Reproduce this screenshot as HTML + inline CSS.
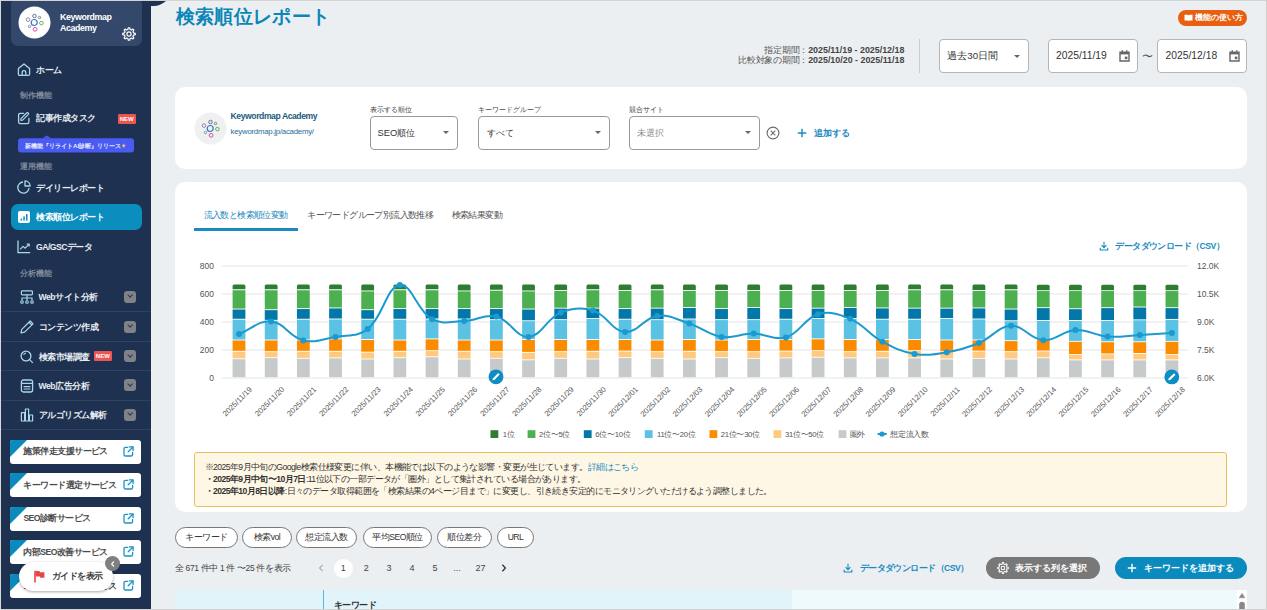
<!DOCTYPE html>
<html lang="ja">
<head>
<meta charset="utf-8">
<style>
*{box-sizing:border-box;margin:0;padding:0}
html,body{width:1267px;height:610px;overflow:hidden}
body{position:relative;background:#ebeff2;font-family:"Liberation Sans",sans-serif;color:#333}
.a{position:absolute}
.t{position:absolute;white-space:nowrap}
.sb{left:1px;top:1px;width:150px;height:608px;background:#1f3150}
.navt{position:absolute;left:36px;font-size:8.6px;letter-spacing:-0.5px;font-weight:bold;color:#e6ecf2;white-space:nowrap;height:12px;line-height:12px;margin-top:0.5px}
.sect{position:absolute;left:20px;margin-top:1px;font-size:7.6px;font-weight:bold;color:#7f8a9b;white-space:nowrap;height:10px;line-height:10px}
.ico{position:absolute;left:17px}
.div{position:absolute;left:1px;width:150px;height:1px;background:#2e4261}
.chev{position:absolute;left:124px;width:12px;height:12px;border-radius:3px;background:#7f8286}
.chev::after{content:"";position:absolute;left:3.8px;top:2.9px;width:3.3px;height:3.3px;border-right:1.2px solid #2a3850;border-bottom:1.2px solid #2a3850;transform:rotate(45deg)}
.new{position:absolute;background:#ee5451;color:#fff;font-size:6px;font-weight:bold;text-align:center;line-height:10.6px;height:10px;border-radius:1.2px}
.svc{position:absolute;left:10px;width:130.5px;height:24px;background:#fff;border-radius:3px;overflow:hidden}
.svc .tri{position:absolute;left:0;top:0;width:0;height:0;border-top:17px solid #0b8bbd;border-right:17px solid transparent}
.svc .st{position:absolute;left:13.4px;top:5.5px;font-size:8.6px;letter-spacing:-0.55px;font-weight:bold;color:#4a4a4a;line-height:12px;white-space:nowrap}
.svc svg{position:absolute;left:113px;top:6px}
.card{position:absolute;left:175px;width:1072px;background:#fff;border-radius:10px}
.sel{position:absolute;background:#fff;border:1px solid #b2b6b9;border-radius:4px}
.caret{position:absolute;width:0;height:0;border-left:3.5px solid transparent;border-right:3.5px solid transparent;border-top:3.5px solid #666}
.lbl{position:absolute;font-size:7px;color:#444;white-space:nowrap;line-height:10px;margin-top:0.6px}
.chip{position:absolute;top:527px;height:21px;border:1px solid #777;border-radius:11px;background:#fff;font-size:8.6px;letter-spacing:-0.5px;font-weight:normal;color:#333;text-align:center;line-height:19px;white-space:nowrap}
.pg{position:absolute;top:562px;font-size:9px;color:#444;line-height:12px;text-align:center;width:14px}
</style>
</head>
<body>
<!-- outer borders -->
<div class="a" style="left:0;top:0;width:1267px;height:1px;background:#d3d3d3"></div>
<div class="a" style="left:0;top:0;width:1px;height:610px;background:#d8d8d8"></div>
<div class="a" style="left:1266px;top:0;width:1px;height:610px;background:#cfcfcf"></div>
<div class="a" style="left:0;top:609px;width:1267px;height:1px;background:#d3d3d3"></div>

<!-- ================= SIDEBAR ================= -->
<div class="a sb"></div>
<svg class="a" style="left:151px;top:1px" width="16" height="7"><path d="M0,0 H15 Q9,5 3,5 H0 Z" fill="#1f3150"/></svg>
<div class="a" style="left:10.5px;top:1px;width:131.5px;height:45px;background:#33486a;border-radius:2px 2px 7px 7px"></div>
<svg class="a" style="left:18px;top:6px" width="33" height="33" viewBox="-16.5 -16.5 33 33">
 <circle r="16" fill="#fff"/>
 <circle cx="-0.3" cy="0" r="3" fill="none" stroke="#2f7ad0" stroke-width="1.2"/>
 <circle cx="0" cy="-6.5" r="1.75" fill="none" stroke="#5d7178" stroke-width="0.95"/>
 <circle cx="5" cy="-5" r="1.2" fill="none" stroke="#777" stroke-width="0.9"/>
 <circle cx="6.9" cy="0.6" r="1.8" fill="none" stroke="#5fae4a" stroke-width="0.95"/>
 <circle cx="-6.5" cy="-2.9" r="1.8" fill="none" stroke="#9a79a8" stroke-width="0.95"/>
 <circle cx="-5" cy="4" r="1.2" fill="none" stroke="#888" stroke-width="0.9"/>
 <circle cx="0.6" cy="6.8" r="1.9" fill="none" stroke="#de4f9a" stroke-width="1"/>
</svg>
<div class="t" style="left:60px;top:11.8px;font-size:8.9px;font-weight:bold;color:#fff;line-height:11.3px;letter-spacing:-0.42px">Keywordmap<br>Academy</div>
<svg class="a" style="left:122.4px;top:27.2px" width="14" height="14" viewBox="0 0 14 14"><path d="M5.86,2.54 L6.31,0.74 L7.69,0.74 L8.14,2.54 L9.34,3.04 L10.94,2.08 L11.92,3.06 L10.96,4.66 L11.46,5.86 L13.26,6.31 L13.26,7.69 L11.46,8.14 L10.96,9.34 L11.92,10.94 L10.94,11.92 L9.34,10.96 L8.14,11.46 L7.69,13.26 L6.31,13.26 L5.86,11.46 L4.66,10.96 L3.06,11.92 L2.08,10.94 L3.04,9.34 L2.54,8.14 L0.74,7.69 L0.74,6.31 L2.54,5.86 L3.04,4.66 L2.08,3.06 L3.06,2.08 L4.66,3.04 Z" fill="none" stroke="#fff" stroke-width="1.2" stroke-linejoin="round"/><circle cx="7" cy="7" r="2.1" fill="none" stroke="#fff" stroke-width="1.2"/></svg>

<!-- home -->
<svg class="ico" style="top:63px" width="14" height="13" viewBox="0 0 14 13"><path d="M1.4,5.6 L7,1 L12.6,5.6 V11 Q12.6,12.3 11.3,12.3 H2.7 Q1.4,12.3 1.4,11 Z M5.2,12.3 V9.2 Q5.2,7.7 7,7.7 Q8.8,7.7 8.8,9.2 V12.3" fill="none" stroke="#a9d8e8" stroke-width="1.3" stroke-linejoin="round"/></svg>
<div class="navt" style="top:63px">ホーム</div>
<div class="sect" style="top:90.3px">制作機能</div>
<svg class="ico" style="top:111px" width="14" height="14" viewBox="0 0 14 14"><path d="M6.6,2.3 H3.2 Q1.6,2.3 1.6,3.9 V11 Q1.6,12.6 3.2,12.6 H10.3 Q11.9,12.6 11.9,11 V7.4" fill="none" stroke="#a9d8e8" stroke-width="1.3" stroke-linecap="round"/><path d="M5.6,9.2 L11.2,3.6 Q12,2.8 11.2,2 Q10.4,1.2 9.6,2 L4,7.6 L3.9,9.3 Z" fill="none" stroke="#a9d8e8" stroke-width="1.2" stroke-linejoin="round"/></svg>
<div class="navt" style="top:111.7px">記事作成タスク</div>
<div class="new" style="left:117.7px;top:113.6px;width:18px">NEW</div>
<svg class="a" style="left:18px;top:135px" width="117" height="18"><path d="M24.5,3.3 L28.7,0.6 L32.9,3.3 Z" fill="#4a5bf2"/><rect x="0" y="3.3" width="116" height="14.2" rx="3" fill="#4a5bf2"/></svg>
<div class="t" style="left:25px;top:140.5px;font-size:6.2px;font-weight:bold;color:#e8ecff;line-height:10px">新機能『リライトAI診断』リリース<span style="color:#f9c86a">✦</span></div>
<div class="sect" style="top:160.6px">運用機能</div>
<svg class="ico" style="top:180px" width="14" height="14" viewBox="0 0 14 14"><path d="M6,2 A5.6,5.6 0 1 0 12,8" fill="none" stroke="#a9d8e8" stroke-width="1.3"/><path d="M8,0.9 A5.3,5.3 0 0 1 13.1,6 H8 Z" fill="none" stroke="#a9d8e8" stroke-width="1.3" stroke-linejoin="round"/></svg>
<div class="navt" style="top:181.5px">デイリーレポート</div>
<div class="a" style="left:10.5px;top:203.7px;width:131.5px;height:26.8px;background:#0b8dbe;border-radius:7px"></div>
<svg class="ico" style="top:211px;left:17.8px" width="12" height="12" viewBox="0 0 12 12"><rect width="12" height="12" rx="2" fill="#fff"/><rect x="2.6" y="7.6" width="1.5" height="2" fill="#0b8dbe"/><rect x="5.3" y="5.4" width="1.5" height="4.2" fill="#0b8dbe"/><rect x="8" y="3" width="1.5" height="6.6" fill="#0b8dbe"/></svg>
<div class="navt" style="top:210.2px;color:#fff">検索順位レポート</div>
<svg class="ico" style="top:240px" width="14" height="14" viewBox="0 0 14 14"><path d="M1,0.5 V12.6 H13.2" fill="none" stroke="#a9d8e8" stroke-width="1.3"/><path d="M3.2,9.4 L6,6.4 L8.2,8.2 L12,4.2 M9.6,4 H12.2 V6.6" fill="none" stroke="#a9d8e8" stroke-width="1.2" stroke-linejoin="round"/></svg>
<div class="navt" style="top:240px">GA/GSCデータ</div>
<div class="sect" style="top:267.5px">分析機能</div>

<svg class="ico" style="top:290px;left:20px" width="14" height="14" viewBox="0 0 14 14"><rect x="1.4" y="0.8" width="11" height="4" rx="0.8" fill="none" stroke="#a9d8e8" stroke-width="1.2"/><path d="M7,4.8 V10.6 M2,10.6 V8 H12 V10.6" fill="none" stroke="#a9d8e8" stroke-width="1.2"/><circle cx="2" cy="12" r="1.3" fill="none" stroke="#a9d8e8" stroke-width="1.1"/><circle cx="7" cy="12" r="1.3" fill="none" stroke="#a9d8e8" stroke-width="1.1"/><circle cx="12" cy="12" r="1.3" fill="none" stroke="#a9d8e8" stroke-width="1.1"/></svg>
<div class="navt" style="top:290.5px;left:38.6px">Webサイト分析</div>
<div class="chev" style="top:290.6px"></div>
<div class="div" style="top:311px"></div>
<svg class="ico" style="top:320px;left:20px" width="14" height="14" viewBox="0 0 14 14"><path d="M1,13 L1.8,9.4 L10.2,1 L13,3.8 L4.6,12.2 Z M9,2.2 L11.8,5" fill="none" stroke="#a9d8e8" stroke-width="1.2" stroke-linejoin="round"/></svg>
<div class="navt" style="top:320px;left:38.6px">コンテンツ作成</div>
<div class="chev" style="top:320.5px"></div>
<div class="div" style="top:341px"></div>
<svg class="ico" style="top:349.5px;left:20px" width="14" height="14" viewBox="0 0 14 14"><circle cx="6" cy="6" r="4.9" fill="none" stroke="#a9d8e8" stroke-width="1.3"/><path d="M9.6,9.6 L12.8,12.8 M3.6,4.8 A2.8,2.8 0 0 1 6,3" fill="none" stroke="#a9d8e8" stroke-width="1.2"/></svg>
<div class="navt" style="top:350px;left:38.6px">検索市場調査</div>
<div class="new" style="left:93.8px;top:351px;width:18px">NEW</div>
<div class="chev" style="top:350px"></div>
<div class="div" style="top:370.3px"></div>
<svg class="ico" style="top:378.5px;left:20px" width="14" height="14" viewBox="0 0 14 14"><rect x="1.4" y="1" width="11.2" height="12" rx="2" fill="none" stroke="#a9d8e8" stroke-width="1.3"/><path d="M1.4,4.4 H12.6 M3.6,7.6 H10.4 M3.6,10 H10.4" fill="none" stroke="#a9d8e8" stroke-width="1.2"/></svg>
<div class="navt" style="top:379px;left:38.6px">Web広告分析</div>
<div class="chev" style="top:379px"></div>
<div class="div" style="top:400.3px"></div>
<svg class="ico" style="top:408px;left:20px" width="14" height="14" viewBox="0 0 14 14"><path d="M1,13 H13 M1.4,13 V4.6 H4.6 V13 M5.4,13 V1 H8.6 V13 M9.4,13 V7 H12.6 V13" fill="none" stroke="#a9d8e8" stroke-width="1.2" stroke-linejoin="round"/></svg>
<div class="navt" style="top:408.6px;left:38.6px">アルゴリズム解析</div>
<div class="chev" style="top:408.6px"></div>
<div class="div" style="top:429.3px"></div>

<!-- service cards -->
<div class="svc" style="top:439.5px"><div class="tri"></div><div class="st">施策伴走支援サービス</div><svg width="11" height="11" viewBox="0 0 11 11"><path d="M4.6,1.4 H2.6 Q1,1.4 1,3 V8.4 Q1,10 2.6,10 H8 Q9.6,10 9.6,8.4 V6.4 M6.4,0.9 H10.1 V4.6 M9.9,1.1 L5.2,5.8" fill="none" stroke="#1a92c6" stroke-width="1.3" stroke-linecap="round"/></svg></div>
<div class="svc" style="top:473px"><div class="tri"></div><div class="st">キーワード選定サービス</div><svg width="11" height="11" viewBox="0 0 11 11"><path d="M4.6,1.4 H2.6 Q1,1.4 1,3 V8.4 Q1,10 2.6,10 H8 Q9.6,10 9.6,8.4 V6.4 M6.4,0.9 H10.1 V4.6 M9.9,1.1 L5.2,5.8" fill="none" stroke="#1a92c6" stroke-width="1.3" stroke-linecap="round"/></svg></div>
<div class="svc" style="top:506.7px"><div class="tri"></div><div class="st">SEO診断サービス</div><svg width="11" height="11" viewBox="0 0 11 11"><path d="M4.6,1.4 H2.6 Q1,1.4 1,3 V8.4 Q1,10 2.6,10 H8 Q9.6,10 9.6,8.4 V6.4 M6.4,0.9 H10.1 V4.6 M9.9,1.1 L5.2,5.8" fill="none" stroke="#1a92c6" stroke-width="1.3" stroke-linecap="round"/></svg></div>
<div class="svc" style="top:540.3px"><div class="tri"></div><div class="st">内部SEO改善サービス</div><svg width="11" height="11" viewBox="0 0 11 11"><path d="M4.6,1.4 H2.6 Q1,1.4 1,3 V8.4 Q1,10 2.6,10 H8 Q9.6,10 9.6,8.4 V6.4 M6.4,0.9 H10.1 V4.6 M9.9,1.1 L5.2,5.8" fill="none" stroke="#1a92c6" stroke-width="1.3" stroke-linecap="round"/></svg></div>
<div class="svc" style="top:574.3px"><div class="tri"></div><div class="st">コンテンツ制作サービス</div><svg width="11" height="11" viewBox="0 0 11 11"><path d="M4.6,1.4 H2.6 Q1,1.4 1,3 V8.4 Q1,10 2.6,10 H8 Q9.6,10 9.6,8.4 V6.4 M6.4,0.9 H10.1 V4.6 M9.9,1.1 L5.2,5.8" fill="none" stroke="#1a92c6" stroke-width="1.3" stroke-linecap="round"/></svg></div>
<!-- guide pill -->
<div class="a" style="left:19px;top:562px;width:94px;height:29px;background:#fff;border-radius:15px;box-shadow:0 1px 3px rgba(0,0,0,0.35)"></div>
<svg class="a" style="left:33.5px;top:570px" width="11" height="13" viewBox="0 0 11 13"><path d="M1,0.8 V12.6" stroke="#e84545" stroke-width="1.6"/><path d="M1.6,1 H5.4 L6,2.2 H10.4 V7.8 H6.4 L5.8,6.6 H1.6 Z" fill="#e84545"/></svg>
<div class="t" style="left:51.6px;top:570px;font-size:8.6px;letter-spacing:-0.5px;font-weight:bold;color:#3c3c3c;line-height:12px">ガイドを表示</div>
<div class="a" style="left:105.4px;top:556px;width:15px;height:15px;border-radius:50%;background:#7f7f7f"></div>
<svg class="a" style="left:109px;top:559.5px" width="8" height="8" viewBox="0 0 8 8"><path d="M5,1.5 L2.6,4 L5,6.5" fill="none" stroke="#fff" stroke-width="1.1"/></svg>

<!-- ================= MAIN ================= -->
<div class="t" style="left:175.5px;top:5.2px;font-size:19px;letter-spacing:0.35px;font-weight:bold;color:#0b86b8;line-height:24px">検索順位レポート</div>
<div class="a" style="left:1177.7px;top:9.7px;width:69.3px;height:16.1px;border-radius:8px;background:#e8600f"></div>
<svg class="a" style="left:1184px;top:14px" width="9" height="8" viewBox="0 0 9 8"><path d="M0.5,0.8 H3.6 Q4.5,0.8 4.5,1.8 V7.4 Q4.5,6.6 3.6,6.6 H0.5 Z M8.5,0.8 H5.4 Q4.5,0.8 4.5,1.8 V7.4 Q4.5,6.6 5.4,6.6 H8.5 Z" fill="#fff"/></svg>
<div class="t" style="left:1194.5px;top:12.5px;font-size:8px;font-weight:bold;color:#fff;line-height:10px">機能の使い方</div>

<div class="t" style="left:700px;width:204.4px;text-align:right;top:44.5px;font-size:8.6px;color:#555;line-height:10.6px"><span style="letter-spacing:-0.25px">指定期間：</span><b style="color:#444;font-size:8.9px">2025/11/19 - 2025/12/18</b><br><span style="letter-spacing:-0.25px">比較対象の期間：</span><b style="color:#444;font-size:8.9px">2025/10/20 - 2025/11/18</b></div>
<div class="a" style="left:919px;top:39px;width:1px;height:34px;background:#c9cdd0"></div>
<div class="sel" style="left:938.5px;top:39.3px;width:90px;height:33.3px"></div>
<div class="t" style="left:947.3px;top:50px;font-size:9.8px;color:#333;line-height:12px">過去30日間</div>
<div class="caret" style="left:1013.5px;top:55px"></div>
<div class="sel" style="left:1047.5px;top:39.3px;width:90.2px;height:33.3px"></div>
<div class="t" style="left:1056px;top:50px;font-size:10.3px;color:#333;line-height:12px">2025/11/19</div>
<svg class="a" style="left:1119px;top:50px" width="11" height="12" viewBox="0 0 11 12"><path d="M1,2.2 H10 V11 H1 Z" fill="none" stroke="#666" stroke-width="1.4"/><rect x="1" y="2" width="9" height="2.4" fill="#666"/><rect x="2.6" y="0.2" width="1.3" height="2" fill="#666"/><rect x="7.1" y="0.2" width="1.3" height="2" fill="#666"/><rect x="5.8" y="6.6" width="2.6" height="2.6" fill="#666"/></svg>
<div class="t" style="left:1142px;top:49px;font-size:11px;color:#555;line-height:14px">〜</div>
<div class="sel" style="left:1157.3px;top:39.3px;width:89.7px;height:33.3px"></div>
<div class="t" style="left:1165.6px;top:50px;font-size:10.3px;color:#333;line-height:12px">2025/12/18</div>
<svg class="a" style="left:1228.5px;top:50px" width="11" height="12" viewBox="0 0 11 12"><path d="M1,2.2 H10 V11 H1 Z" fill="none" stroke="#666" stroke-width="1.4"/><rect x="1" y="2" width="9" height="2.4" fill="#666"/><rect x="2.6" y="0.2" width="1.3" height="2" fill="#666"/><rect x="7.1" y="0.2" width="1.3" height="2" fill="#666"/><rect x="5.8" y="6.6" width="2.6" height="2.6" fill="#666"/></svg>

<!-- filter card -->
<div class="card" style="top:87px;height:82px"></div>
<svg class="a" style="left:194px;top:112px" width="33" height="33" viewBox="-16.5 -16.5 33 33">
 <circle r="16" fill="#eef0f2"/>
 <circle cx="-0.3" cy="0" r="3" fill="none" stroke="#2f7ad0" stroke-width="1.2"/>
 <circle cx="0" cy="-6.5" r="1.75" fill="none" stroke="#5d7178" stroke-width="0.95"/>
 <circle cx="5" cy="-5" r="1.2" fill="none" stroke="#777" stroke-width="0.9"/>
 <circle cx="6.9" cy="0.6" r="1.8" fill="none" stroke="#5fae4a" stroke-width="0.95"/>
 <circle cx="-6.5" cy="-2.9" r="1.8" fill="none" stroke="#9a79a8" stroke-width="0.95"/>
 <circle cx="-5" cy="4" r="1.2" fill="none" stroke="#888" stroke-width="0.9"/>
 <circle cx="0.6" cy="6.8" r="1.9" fill="none" stroke="#de4f9a" stroke-width="1"/>
</svg>
<div class="t" style="left:230.6px;top:110px;font-size:8.6px;letter-spacing:-0.43px;font-weight:bold;color:#1b5a80;line-height:12px">Keywordmap Academy</div>
<div class="t" style="left:230.6px;top:125.5px;font-size:7.8px;letter-spacing:-0.24px;color:#1f6d9a;line-height:11px">keywordmap.jp/academy/</div>

<div class="lbl" style="left:369.8px;top:104px">表示する順位</div>
<div class="sel" style="left:369.8px;top:116px;width:88.4px;height:33.8px;border-color:#9a9a9a"></div>
<div class="t" style="left:377.6px;top:126.5px;font-size:9.4px;color:#333;line-height:12px">SEO順位</div>
<div class="caret" style="left:443px;top:131px"></div>

<div class="lbl" style="left:477.6px;top:104px">キーワードグループ</div>
<div class="sel" style="left:477.6px;top:116px;width:132px;height:33.8px;border-color:#9a9a9a"></div>
<div class="t" style="left:486.5px;top:126.5px;font-size:9.4px;color:#333;line-height:12px">すべて</div>
<div class="caret" style="left:594.5px;top:131px"></div>

<div class="lbl" style="left:628.5px;top:104px">競合サイト</div>
<div class="sel" style="left:628.5px;top:116px;width:131.7px;height:33.8px;border-color:#9a9a9a"></div>
<div class="t" style="left:637px;top:126.5px;font-size:9.4px;color:#8a8a8a;line-height:12px">未選択</div>
<div class="caret" style="left:745px;top:131px"></div>
<svg class="a" style="left:766px;top:126px" width="14" height="14" viewBox="0 0 14 14"><circle cx="7" cy="7" r="5.9" fill="none" stroke="#6a6a6a" stroke-width="1.1"/><path d="M4.7,4.7 L9.3,9.3 M9.3,4.7 L4.7,9.3" stroke="#6a6a6a" stroke-width="1.1"/></svg>
<svg class="a" style="left:797px;top:128px" width="10" height="10" viewBox="0 0 10 10"><path d="M5,0.8 V9.2 M0.8,5 H9.2" stroke="#1a8ac0" stroke-width="1.4"/></svg>
<div class="t" style="left:813.8px;top:126.5px;font-size:9px;font-weight:bold;color:#1a8ac0;line-height:12px">追加する</div>

<!-- chart card -->
<div class="card" style="top:182.4px;height:330px"></div>
<div class="t" style="left:203.7px;top:209px;font-size:8.6px;letter-spacing:-0.6px;color:#1a8ac0;line-height:12px">流入数と検索順位変動</div>
<div class="a" style="left:194px;top:228px;width:103.6px;height:2.6px;background:#1a8ac0"></div>
<div class="t" style="left:307.3px;top:209px;font-size:8.6px;letter-spacing:-0.6px;color:#555;line-height:12px">キーワードグループ別流入数推移</div>
<div class="t" style="left:451.7px;top:209px;font-size:8.6px;letter-spacing:-0.6px;color:#555;line-height:12px">検索結果変動</div>
<svg class="a" style="left:1098.5px;top:240.5px" width="10" height="10" viewBox="0 0 10 10"><path d="M5,0.8 V6.4 M2.6,4.2 L5,6.6 L7.4,4.2 M1.2,6.8 V9 H8.8 V6.8" fill="none" stroke="#1a8ac0" stroke-width="1.1"/></svg>
<div class="t" style="left:1115.2px;top:240px;font-size:8.6px;letter-spacing:-0.56px;font-weight:bold;color:#1a8ac0;line-height:12px">データダウンロード（CSV）</div>

<svg width="1267" height="610" style="position:absolute;left:0;top:0">
<line x1="222" y1="266" x2="1188" y2="266" stroke="#e5e5e5" stroke-width="1"/>
<line x1="222" y1="294" x2="1188" y2="294" stroke="#e5e5e5" stroke-width="1"/>
<line x1="222" y1="322" x2="1188" y2="322" stroke="#e5e5e5" stroke-width="1"/>
<line x1="222" y1="350" x2="1188" y2="350" stroke="#e5e5e5" stroke-width="1"/>
<line x1="222" y1="378" x2="1188" y2="378" stroke="#e5e5e5" stroke-width="1"/>
<text x="214" y="269" text-anchor="end" font-size="8.5" fill="#555">800</text>
<text x="1197" y="269" font-size="8.5" fill="#555">12.0K</text>
<text x="214" y="297" text-anchor="end" font-size="8.5" fill="#555">600</text>
<text x="1197" y="297" font-size="8.5" fill="#555">10.5K</text>
<text x="214" y="325" text-anchor="end" font-size="8.5" fill="#555">400</text>
<text x="1197" y="325" font-size="8.5" fill="#555">9.0K</text>
<text x="214" y="353" text-anchor="end" font-size="8.5" fill="#555">200</text>
<text x="1197" y="353" font-size="8.5" fill="#555">7.5K</text>
<text x="214" y="381" text-anchor="end" font-size="8.5" fill="#555">0</text>
<text x="1197" y="381" font-size="8.5" fill="#555">6.0K</text>
<path d="M232.60,289.36 V286.00 Q232.60,284.50 234.10,284.50 H243.90 Q245.40,284.50 245.40,286.00 V289.36 Z" fill="#2e7d32"/>
<rect x="232.60" y="290.26" width="12.8" height="18.33" fill="#4caf50"/>
<rect x="232.60" y="309.49" width="12.8" height="9.27" fill="#0277a8"/>
<rect x="232.60" y="319.66" width="12.8" height="19.87" fill="#5bc2e3"/>
<rect x="232.60" y="340.43" width="12.8" height="10.37" fill="#fb8c00"/>
<rect x="232.60" y="351.70" width="12.8" height="6.61" fill="#ffc97f"/>
<rect x="232.60" y="359.21" width="12.8" height="17.99" fill="#c6cacb"/>
<text x="252.6" y="390.0" text-anchor="end" font-size="7.7" fill="#555" transform="rotate(-45 252.6 390)">2025/11/19</text>
<path d="M264.77,289.36 V286.00 Q264.77,284.50 266.27,284.50 H276.07 Q277.57,284.50 277.57,286.00 V289.36 Z" fill="#2e7d32"/>
<rect x="264.77" y="290.26" width="12.8" height="18.99" fill="#4caf50"/>
<rect x="264.77" y="310.15" width="12.8" height="9.71" fill="#0277a8"/>
<rect x="264.77" y="320.76" width="12.8" height="18.77" fill="#5bc2e3"/>
<rect x="264.77" y="340.43" width="12.8" height="10.81" fill="#fb8c00"/>
<rect x="264.77" y="352.14" width="12.8" height="5.07" fill="#ffc97f"/>
<rect x="264.77" y="358.11" width="12.8" height="19.09" fill="#c6cacb"/>
<text x="284.8" y="390.0" text-anchor="end" font-size="7.7" fill="#555" transform="rotate(-45 284.8 390)">2025/11/20</text>
<path d="M296.94,289.36 V286.00 Q296.94,284.50 298.44,284.50 H308.24 Q309.74,284.50 309.74,286.00 V289.36 Z" fill="#2e7d32"/>
<rect x="296.94" y="290.26" width="12.8" height="17.88" fill="#4caf50"/>
<rect x="296.94" y="309.05" width="12.8" height="9.71" fill="#0277a8"/>
<rect x="296.94" y="319.66" width="12.8" height="19.87" fill="#5bc2e3"/>
<rect x="296.94" y="340.43" width="12.8" height="10.37" fill="#fb8c00"/>
<rect x="296.94" y="351.70" width="12.8" height="6.17" fill="#ffc97f"/>
<rect x="296.94" y="358.77" width="12.8" height="18.43" fill="#c6cacb"/>
<text x="316.9" y="390.0" text-anchor="end" font-size="7.7" fill="#555" transform="rotate(-45 316.9 390)">2025/11/21</text>
<path d="M329.11,289.36 V286.00 Q329.11,284.50 330.61,284.50 H340.41 Q341.91,284.50 341.91,286.00 V289.36 Z" fill="#2e7d32"/>
<rect x="329.11" y="290.26" width="12.8" height="17.22" fill="#4caf50"/>
<rect x="329.11" y="308.39" width="12.8" height="10.15" fill="#0277a8"/>
<rect x="329.11" y="319.44" width="12.8" height="18.99" fill="#5bc2e3"/>
<rect x="329.11" y="339.33" width="12.8" height="11.48" fill="#fb8c00"/>
<rect x="329.11" y="351.70" width="12.8" height="5.73" fill="#ffc97f"/>
<rect x="329.11" y="358.33" width="12.8" height="18.87" fill="#c6cacb"/>
<text x="349.1" y="390.0" text-anchor="end" font-size="7.7" fill="#555" transform="rotate(-45 349.1 390)">2025/11/22</text>
<path d="M361.28,290.47 V286.00 Q361.28,284.50 362.78,284.50 H372.58 Q374.08,284.50 374.08,286.00 V290.47 Z" fill="#2e7d32"/>
<rect x="361.28" y="291.37" width="12.8" height="17.88" fill="#4caf50"/>
<rect x="361.28" y="310.15" width="12.8" height="8.60" fill="#0277a8"/>
<rect x="361.28" y="319.66" width="12.8" height="19.43" fill="#5bc2e3"/>
<rect x="361.28" y="339.99" width="12.8" height="11.70" fill="#fb8c00"/>
<rect x="361.28" y="352.59" width="12.8" height="5.95" fill="#ffc97f"/>
<rect x="361.28" y="359.44" width="12.8" height="17.76" fill="#c6cacb"/>
<text x="381.3" y="390.0" text-anchor="end" font-size="7.7" fill="#555" transform="rotate(-45 381.3 390)">2025/11/23</text>
<path d="M393.45,289.36 V286.00 Q393.45,284.50 394.95,284.50 H404.75 Q406.25,284.50 406.25,286.00 V289.36 Z" fill="#2e7d32"/>
<rect x="393.45" y="290.26" width="12.8" height="17.88" fill="#4caf50"/>
<rect x="393.45" y="309.05" width="12.8" height="9.71" fill="#0277a8"/>
<rect x="393.45" y="319.66" width="12.8" height="19.87" fill="#5bc2e3"/>
<rect x="393.45" y="340.43" width="12.8" height="10.37" fill="#fb8c00"/>
<rect x="393.45" y="351.70" width="12.8" height="5.51" fill="#ffc97f"/>
<rect x="393.45" y="358.11" width="12.8" height="19.09" fill="#c6cacb"/>
<text x="413.5" y="390.0" text-anchor="end" font-size="7.7" fill="#555" transform="rotate(-45 413.5 390)">2025/11/24</text>
<path d="M425.62,289.36 V286.00 Q425.62,284.50 427.12,284.50 H436.92 Q438.42,284.50 438.42,286.00 V289.36 Z" fill="#2e7d32"/>
<rect x="425.62" y="290.26" width="12.8" height="17.88" fill="#4caf50"/>
<rect x="425.62" y="309.05" width="12.8" height="9.49" fill="#0277a8"/>
<rect x="425.62" y="319.44" width="12.8" height="18.99" fill="#5bc2e3"/>
<rect x="425.62" y="339.33" width="12.8" height="10.81" fill="#fb8c00"/>
<rect x="425.62" y="351.04" width="12.8" height="5.29" fill="#ffc97f"/>
<rect x="425.62" y="357.23" width="12.8" height="19.97" fill="#c6cacb"/>
<text x="445.6" y="390.0" text-anchor="end" font-size="7.7" fill="#555" transform="rotate(-45 445.6 390)">2025/11/25</text>
<path d="M457.79,290.47 V286.00 Q457.79,284.50 459.29,284.50 H469.09 Q470.59,284.50 470.59,286.00 V290.47 Z" fill="#2e7d32"/>
<rect x="457.79" y="291.37" width="12.8" height="16.78" fill="#4caf50"/>
<rect x="457.79" y="309.05" width="12.8" height="9.49" fill="#0277a8"/>
<rect x="457.79" y="319.44" width="12.8" height="20.09" fill="#5bc2e3"/>
<rect x="457.79" y="340.43" width="12.8" height="10.37" fill="#fb8c00"/>
<rect x="457.79" y="351.70" width="12.8" height="6.83" fill="#ffc97f"/>
<rect x="457.79" y="359.44" width="12.8" height="17.76" fill="#c6cacb"/>
<text x="477.8" y="390.0" text-anchor="end" font-size="7.7" fill="#555" transform="rotate(-45 477.8 390)">2025/11/26</text>
<path d="M489.96,289.81 V286.00 Q489.96,284.50 491.46,284.50 H501.26 Q502.76,284.50 502.76,286.00 V289.81 Z" fill="#2e7d32"/>
<rect x="489.96" y="290.71" width="12.8" height="17.44" fill="#4caf50"/>
<rect x="489.96" y="309.05" width="12.8" height="10.15" fill="#0277a8"/>
<rect x="489.96" y="320.10" width="12.8" height="19.43" fill="#5bc2e3"/>
<rect x="489.96" y="340.43" width="12.8" height="10.81" fill="#fb8c00"/>
<rect x="489.96" y="352.14" width="12.8" height="5.73" fill="#ffc97f"/>
<rect x="489.96" y="358.77" width="12.8" height="18.43" fill="#c6cacb"/>
<text x="510.0" y="390.0" text-anchor="end" font-size="7.7" fill="#555" transform="rotate(-45 510.0 390)">2025/11/27</text>
<path d="M522.13,290.47 V286.00 Q522.13,284.50 523.63,284.50 H533.43 Q534.93,284.50 534.93,286.00 V290.47 Z" fill="#2e7d32"/>
<rect x="522.13" y="291.37" width="12.8" height="17.22" fill="#4caf50"/>
<rect x="522.13" y="309.49" width="12.8" height="10.81" fill="#0277a8"/>
<rect x="522.13" y="321.20" width="12.8" height="17.88" fill="#5bc2e3"/>
<rect x="522.13" y="339.99" width="12.8" height="11.92" fill="#fb8c00"/>
<rect x="522.13" y="352.81" width="12.8" height="6.61" fill="#ffc97f"/>
<rect x="522.13" y="360.32" width="12.8" height="16.88" fill="#c6cacb"/>
<text x="542.1" y="390.0" text-anchor="end" font-size="7.7" fill="#555" transform="rotate(-45 542.1 390)">2025/11/28</text>
<path d="M554.30,290.03 V286.00 Q554.30,284.50 555.80,284.50 H565.60 Q567.10,284.50 567.10,286.00 V290.03 Z" fill="#2e7d32"/>
<rect x="554.30" y="290.93" width="12.8" height="16.78" fill="#4caf50"/>
<rect x="554.30" y="308.61" width="12.8" height="10.59" fill="#0277a8"/>
<rect x="554.30" y="320.10" width="12.8" height="18.99" fill="#5bc2e3"/>
<rect x="554.30" y="339.99" width="12.8" height="11.25" fill="#fb8c00"/>
<rect x="554.30" y="352.14" width="12.8" height="5.73" fill="#ffc97f"/>
<rect x="554.30" y="358.77" width="12.8" height="18.43" fill="#c6cacb"/>
<text x="574.3" y="390.0" text-anchor="end" font-size="7.7" fill="#555" transform="rotate(-45 574.3 390)">2025/11/29</text>
<path d="M586.47,289.36 V286.00 Q586.47,284.50 587.97,284.50 H597.77 Q599.27,284.50 599.27,286.00 V289.36 Z" fill="#2e7d32"/>
<rect x="586.47" y="290.26" width="12.8" height="17.44" fill="#4caf50"/>
<rect x="586.47" y="308.61" width="12.8" height="9.49" fill="#0277a8"/>
<rect x="586.47" y="318.99" width="12.8" height="20.09" fill="#5bc2e3"/>
<rect x="586.47" y="339.99" width="12.8" height="10.81" fill="#fb8c00"/>
<rect x="586.47" y="351.70" width="12.8" height="6.83" fill="#ffc97f"/>
<rect x="586.47" y="359.44" width="12.8" height="17.76" fill="#c6cacb"/>
<text x="606.5" y="390.0" text-anchor="end" font-size="7.7" fill="#555" transform="rotate(-45 606.5 390)">2025/11/30</text>
<path d="M618.64,290.03 V286.00 Q618.64,284.50 620.14,284.50 H629.94 Q631.44,284.50 631.44,286.00 V290.03 Z" fill="#2e7d32"/>
<rect x="618.64" y="290.93" width="12.8" height="17.22" fill="#4caf50"/>
<rect x="618.64" y="309.05" width="12.8" height="9.71" fill="#0277a8"/>
<rect x="618.64" y="319.66" width="12.8" height="19.43" fill="#5bc2e3"/>
<rect x="618.64" y="339.99" width="12.8" height="10.59" fill="#fb8c00"/>
<rect x="618.64" y="351.48" width="12.8" height="5.73" fill="#ffc97f"/>
<rect x="618.64" y="358.11" width="12.8" height="19.09" fill="#c6cacb"/>
<text x="638.6" y="390.0" text-anchor="end" font-size="7.7" fill="#555" transform="rotate(-45 638.6 390)">2025/12/01</text>
<path d="M650.81,289.36 V286.00 Q650.81,284.50 652.31,284.50 H662.11 Q663.61,284.50 663.61,286.00 V289.36 Z" fill="#2e7d32"/>
<rect x="650.81" y="290.26" width="12.8" height="17.44" fill="#4caf50"/>
<rect x="650.81" y="308.61" width="12.8" height="10.59" fill="#0277a8"/>
<rect x="650.81" y="320.10" width="12.8" height="19.43" fill="#5bc2e3"/>
<rect x="650.81" y="340.43" width="12.8" height="10.81" fill="#fb8c00"/>
<rect x="650.81" y="352.14" width="12.8" height="5.73" fill="#ffc97f"/>
<rect x="650.81" y="358.77" width="12.8" height="18.43" fill="#c6cacb"/>
<text x="670.8" y="390.0" text-anchor="end" font-size="7.7" fill="#555" transform="rotate(-45 670.8 390)">2025/12/02</text>
<path d="M682.98,290.03 V286.00 Q682.98,284.50 684.48,284.50 H694.28 Q695.78,284.50 695.78,286.00 V290.03 Z" fill="#2e7d32"/>
<rect x="682.98" y="290.93" width="12.8" height="16.12" fill="#4caf50"/>
<rect x="682.98" y="307.94" width="12.8" height="10.59" fill="#0277a8"/>
<rect x="682.98" y="319.44" width="12.8" height="19.65" fill="#5bc2e3"/>
<rect x="682.98" y="339.99" width="12.8" height="10.81" fill="#fb8c00"/>
<rect x="682.98" y="351.70" width="12.8" height="6.83" fill="#ffc97f"/>
<rect x="682.98" y="359.44" width="12.8" height="17.76" fill="#c6cacb"/>
<text x="703.0" y="390.0" text-anchor="end" font-size="7.7" fill="#555" transform="rotate(-45 703.0 390)">2025/12/03</text>
<path d="M715.15,290.03 V286.00 Q715.15,284.50 716.65,284.50 H726.45 Q727.95,284.50 727.95,286.00 V290.03 Z" fill="#2e7d32"/>
<rect x="715.15" y="290.93" width="12.8" height="17.22" fill="#4caf50"/>
<rect x="715.15" y="309.05" width="12.8" height="10.15" fill="#0277a8"/>
<rect x="715.15" y="320.10" width="12.8" height="19.43" fill="#5bc2e3"/>
<rect x="715.15" y="340.43" width="12.8" height="10.81" fill="#fb8c00"/>
<rect x="715.15" y="352.14" width="12.8" height="5.07" fill="#ffc97f"/>
<rect x="715.15" y="358.11" width="12.8" height="19.09" fill="#c6cacb"/>
<text x="735.1" y="390.0" text-anchor="end" font-size="7.7" fill="#555" transform="rotate(-45 735.1 390)">2025/12/04</text>
<path d="M747.32,290.03 V286.00 Q747.32,284.50 748.82,284.50 H758.62 Q760.12,284.50 760.12,286.00 V290.03 Z" fill="#2e7d32"/>
<rect x="747.32" y="290.93" width="12.8" height="16.12" fill="#4caf50"/>
<rect x="747.32" y="307.94" width="12.8" height="11.25" fill="#0277a8"/>
<rect x="747.32" y="320.10" width="12.8" height="18.99" fill="#5bc2e3"/>
<rect x="747.32" y="339.99" width="12.8" height="11.25" fill="#fb8c00"/>
<rect x="747.32" y="352.14" width="12.8" height="5.73" fill="#ffc97f"/>
<rect x="747.32" y="358.77" width="12.8" height="18.43" fill="#c6cacb"/>
<text x="767.3" y="390.0" text-anchor="end" font-size="7.7" fill="#555" transform="rotate(-45 767.3 390)">2025/12/05</text>
<path d="M779.49,290.03 V286.00 Q779.49,284.50 780.99,284.50 H790.79 Q792.29,284.50 792.29,286.00 V290.03 Z" fill="#2e7d32"/>
<rect x="779.49" y="290.93" width="12.8" height="17.22" fill="#4caf50"/>
<rect x="779.49" y="309.05" width="12.8" height="9.71" fill="#0277a8"/>
<rect x="779.49" y="319.66" width="12.8" height="19.43" fill="#5bc2e3"/>
<rect x="779.49" y="339.99" width="12.8" height="10.59" fill="#fb8c00"/>
<rect x="779.49" y="351.48" width="12.8" height="5.95" fill="#ffc97f"/>
<rect x="779.49" y="358.33" width="12.8" height="18.87" fill="#c6cacb"/>
<text x="799.5" y="390.0" text-anchor="end" font-size="7.7" fill="#555" transform="rotate(-45 799.5 390)">2025/12/06</text>
<path d="M811.66,290.03 V286.00 Q811.66,284.50 813.16,284.50 H822.96 Q824.46,284.50 824.46,286.00 V290.03 Z" fill="#2e7d32"/>
<rect x="811.66" y="290.93" width="12.8" height="16.78" fill="#4caf50"/>
<rect x="811.66" y="308.61" width="12.8" height="9.49" fill="#0277a8"/>
<rect x="811.66" y="318.99" width="12.8" height="19.43" fill="#5bc2e3"/>
<rect x="811.66" y="339.33" width="12.8" height="10.81" fill="#fb8c00"/>
<rect x="811.66" y="351.04" width="12.8" height="5.73" fill="#ffc97f"/>
<rect x="811.66" y="357.67" width="12.8" height="19.53" fill="#c6cacb"/>
<text x="831.7" y="390.0" text-anchor="end" font-size="7.7" fill="#555" transform="rotate(-45 831.7 390)">2025/12/07</text>
<path d="M843.83,290.03 V286.00 Q843.83,284.50 845.33,284.50 H855.13 Q856.63,284.50 856.63,286.00 V290.03 Z" fill="#2e7d32"/>
<rect x="843.83" y="290.93" width="12.8" height="16.12" fill="#4caf50"/>
<rect x="843.83" y="307.94" width="12.8" height="10.15" fill="#0277a8"/>
<rect x="843.83" y="318.99" width="12.8" height="20.09" fill="#5bc2e3"/>
<rect x="843.83" y="339.99" width="12.8" height="11.25" fill="#fb8c00"/>
<rect x="843.83" y="352.14" width="12.8" height="5.29" fill="#ffc97f"/>
<rect x="843.83" y="358.33" width="12.8" height="18.87" fill="#c6cacb"/>
<text x="863.8" y="390.0" text-anchor="end" font-size="7.7" fill="#555" transform="rotate(-45 863.8 390)">2025/12/08</text>
<path d="M876.00,290.03 V286.00 Q876.00,284.50 877.50,284.50 H887.30 Q888.80,284.50 888.80,286.00 V290.03 Z" fill="#2e7d32"/>
<rect x="876.00" y="290.93" width="12.8" height="16.56" fill="#4caf50"/>
<rect x="876.00" y="308.39" width="12.8" height="10.37" fill="#0277a8"/>
<rect x="876.00" y="319.66" width="12.8" height="19.43" fill="#5bc2e3"/>
<rect x="876.00" y="339.99" width="12.8" height="10.81" fill="#fb8c00"/>
<rect x="876.00" y="351.70" width="12.8" height="5.73" fill="#ffc97f"/>
<rect x="876.00" y="358.33" width="12.8" height="18.87" fill="#c6cacb"/>
<text x="896.0" y="390.0" text-anchor="end" font-size="7.7" fill="#555" transform="rotate(-45 896.0 390)">2025/12/09</text>
<path d="M908.17,289.36 V286.00 Q908.17,284.50 909.67,284.50 H919.47 Q920.97,284.50 920.97,286.00 V289.36 Z" fill="#2e7d32"/>
<rect x="908.17" y="290.26" width="12.8" height="17.44" fill="#4caf50"/>
<rect x="908.17" y="308.61" width="12.8" height="10.15" fill="#0277a8"/>
<rect x="908.17" y="319.66" width="12.8" height="19.43" fill="#5bc2e3"/>
<rect x="908.17" y="339.99" width="12.8" height="10.15" fill="#fb8c00"/>
<rect x="908.17" y="351.04" width="12.8" height="6.39" fill="#ffc97f"/>
<rect x="908.17" y="358.33" width="12.8" height="18.87" fill="#c6cacb"/>
<text x="928.2" y="390.0" text-anchor="end" font-size="7.7" fill="#555" transform="rotate(-45 928.2 390)">2025/12/10</text>
<path d="M940.34,289.36 V286.00 Q940.34,284.50 941.84,284.50 H951.64 Q953.14,284.50 953.14,286.00 V289.36 Z" fill="#2e7d32"/>
<rect x="940.34" y="290.26" width="12.8" height="17.44" fill="#4caf50"/>
<rect x="940.34" y="308.61" width="12.8" height="9.49" fill="#0277a8"/>
<rect x="940.34" y="318.99" width="12.8" height="20.54" fill="#5bc2e3"/>
<rect x="940.34" y="340.43" width="12.8" height="10.81" fill="#fb8c00"/>
<rect x="940.34" y="352.14" width="12.8" height="6.39" fill="#ffc97f"/>
<rect x="940.34" y="359.44" width="12.8" height="17.76" fill="#c6cacb"/>
<text x="960.3" y="390.0" text-anchor="end" font-size="7.7" fill="#555" transform="rotate(-45 960.3 390)">2025/12/11</text>
<path d="M972.51,290.03 V286.00 Q972.51,284.50 974.01,284.50 H983.81 Q985.31,284.50 985.31,286.00 V290.03 Z" fill="#2e7d32"/>
<rect x="972.51" y="290.93" width="12.8" height="16.56" fill="#4caf50"/>
<rect x="972.51" y="308.39" width="12.8" height="10.15" fill="#0277a8"/>
<rect x="972.51" y="319.44" width="12.8" height="20.09" fill="#5bc2e3"/>
<rect x="972.51" y="340.43" width="12.8" height="10.15" fill="#fb8c00"/>
<rect x="972.51" y="351.48" width="12.8" height="6.39" fill="#ffc97f"/>
<rect x="972.51" y="358.77" width="12.8" height="18.43" fill="#c6cacb"/>
<text x="992.5" y="390.0" text-anchor="end" font-size="7.7" fill="#555" transform="rotate(-45 992.5 390)">2025/12/12</text>
<path d="M1004.68,289.36 V286.00 Q1004.68,284.50 1006.18,284.50 H1015.98 Q1017.48,284.50 1017.48,286.00 V289.36 Z" fill="#2e7d32"/>
<rect x="1004.68" y="290.26" width="12.8" height="18.33" fill="#4caf50"/>
<rect x="1004.68" y="309.49" width="12.8" height="10.81" fill="#0277a8"/>
<rect x="1004.68" y="321.20" width="12.8" height="18.99" fill="#5bc2e3"/>
<rect x="1004.68" y="341.09" width="12.8" height="10.15" fill="#fb8c00"/>
<rect x="1004.68" y="352.14" width="12.8" height="6.39" fill="#ffc97f"/>
<rect x="1004.68" y="359.44" width="12.8" height="17.76" fill="#c6cacb"/>
<text x="1024.7" y="390.0" text-anchor="end" font-size="7.7" fill="#555" transform="rotate(-45 1024.7 390)">2025/12/13</text>
<path d="M1036.85,290.17 V286.34 Q1036.85,284.84 1038.35,284.84 H1048.15 Q1049.65,284.84 1049.65,286.34 V290.17 Z" fill="#2e7d32"/>
<rect x="1036.85" y="291.07" width="12.8" height="16.15" fill="#4caf50"/>
<rect x="1036.85" y="308.12" width="12.8" height="11.89" fill="#0277a8"/>
<rect x="1036.85" y="320.90" width="12.8" height="18.28" fill="#5bc2e3"/>
<rect x="1036.85" y="340.09" width="12.8" height="10.40" fill="#fb8c00"/>
<rect x="1036.85" y="351.38" width="12.8" height="5.92" fill="#ffc97f"/>
<rect x="1036.85" y="358.20" width="12.8" height="19.00" fill="#c6cacb"/>
<text x="1056.8" y="390.0" text-anchor="end" font-size="7.7" fill="#555" transform="rotate(-45 1056.8 390)">2025/12/14</text>
<path d="M1069.02,290.17 V286.34 Q1069.02,284.84 1070.52,284.84 H1080.32 Q1081.82,284.84 1081.82,286.34 V290.17 Z" fill="#2e7d32"/>
<rect x="1069.02" y="291.07" width="12.8" height="17.22" fill="#4caf50"/>
<rect x="1069.02" y="309.18" width="12.8" height="10.82" fill="#0277a8"/>
<rect x="1069.02" y="320.90" width="12.8" height="19.99" fill="#5bc2e3"/>
<rect x="1069.02" y="341.79" width="12.8" height="12.31" fill="#fb8c00"/>
<rect x="1069.02" y="355.00" width="12.8" height="4.43" fill="#ffc97f"/>
<rect x="1069.02" y="360.33" width="12.8" height="16.87" fill="#c6cacb"/>
<text x="1089.0" y="390.0" text-anchor="end" font-size="7.7" fill="#555" transform="rotate(-45 1089.0 390)">2025/12/15</text>
<path d="M1101.19,290.17 V286.34 Q1101.19,284.84 1102.69,284.84 H1112.49 Q1113.99,284.84 1113.99,286.34 V290.17 Z" fill="#2e7d32"/>
<rect x="1101.19" y="291.07" width="12.8" height="16.15" fill="#4caf50"/>
<rect x="1101.19" y="308.12" width="12.8" height="11.89" fill="#0277a8"/>
<rect x="1101.19" y="320.90" width="12.8" height="20.41" fill="#5bc2e3"/>
<rect x="1101.19" y="342.22" width="12.8" height="11.25" fill="#fb8c00"/>
<rect x="1101.19" y="354.37" width="12.8" height="5.07" fill="#ffc97f"/>
<rect x="1101.19" y="360.33" width="12.8" height="16.87" fill="#c6cacb"/>
<text x="1121.2" y="390.0" text-anchor="end" font-size="7.7" fill="#555" transform="rotate(-45 1121.2 390)">2025/12/16</text>
<path d="M1133.36,290.17 V286.34 Q1133.36,284.84 1134.86,284.84 H1144.66 Q1146.16,284.84 1146.16,286.34 V290.17 Z" fill="#2e7d32"/>
<rect x="1133.36" y="291.07" width="12.8" height="15.51" fill="#4caf50"/>
<rect x="1133.36" y="307.48" width="12.8" height="11.89" fill="#0277a8"/>
<rect x="1133.36" y="320.26" width="12.8" height="21.05" fill="#5bc2e3"/>
<rect x="1133.36" y="342.22" width="12.8" height="10.82" fill="#fb8c00"/>
<rect x="1133.36" y="353.94" width="12.8" height="5.49" fill="#ffc97f"/>
<rect x="1133.36" y="360.33" width="12.8" height="16.87" fill="#c6cacb"/>
<text x="1153.4" y="390.0" text-anchor="end" font-size="7.7" fill="#555" transform="rotate(-45 1153.4 390)">2025/12/17</text>
<path d="M1165.53,290.17 V286.34 Q1165.53,284.84 1167.03,284.84 H1176.83 Q1178.33,284.84 1178.33,286.34 V290.17 Z" fill="#2e7d32"/>
<rect x="1165.53" y="291.07" width="12.8" height="16.15" fill="#4caf50"/>
<rect x="1165.53" y="308.12" width="12.8" height="10.82" fill="#0277a8"/>
<rect x="1165.53" y="319.84" width="12.8" height="21.05" fill="#5bc2e3"/>
<rect x="1165.53" y="341.79" width="12.8" height="12.31" fill="#fb8c00"/>
<rect x="1165.53" y="355.00" width="12.8" height="4.43" fill="#ffc97f"/>
<rect x="1165.53" y="360.33" width="12.8" height="16.87" fill="#c6cacb"/>
<text x="1185.5" y="390.0" text-anchor="end" font-size="7.7" fill="#555" transform="rotate(-45 1185.5 390)">2025/12/18</text>
<path d="M239.00,334.00 C251.87,328.96 258.81,320.17 271.17,321.40 C284.54,322.73 289.55,337.08 303.34,340.40 C315.28,343.28 322.79,339.13 335.51,336.90 C348.52,334.61 357.96,336.94 367.68,329.10 C383.70,316.18 386.01,287.13 399.85,285.00 C411.75,283.17 416.76,310.66 432.02,319.20 C442.49,325.06 451.37,321.54 464.19,321.00 C477.11,320.46 484.51,313.57 496.36,316.50 C510.25,319.93 516.03,337.66 528.53,336.90 C541.76,336.10 546.40,318.49 560.70,312.60 C572.14,307.89 581.18,306.88 592.87,310.40 C606.92,314.64 611.69,330.86 625.04,332.00 C637.43,333.06 643.80,317.65 657.21,315.90 C669.54,314.29 676.84,319.51 689.38,323.60 C702.58,327.91 708.21,334.83 721.55,336.90 C733.94,338.83 740.87,333.48 753.72,333.60 C766.60,333.72 774.32,340.97 785.89,337.50 C800.05,333.25 803.91,318.41 818.06,314.30 C829.65,310.93 838.61,313.85 850.23,318.80 C864.35,324.81 868.65,334.20 882.40,341.70 C894.38,348.24 901.28,351.71 914.57,353.90 C927.01,355.95 934.12,354.44 946.74,352.30 C959.86,350.08 966.59,348.07 978.91,343.00 C992.33,337.47 998.00,326.35 1011.08,325.80 C1023.73,325.27 1030.10,339.44 1043.25,340.30 C1055.84,341.12 1062.37,330.75 1075.42,330.00 C1088.11,329.27 1094.60,335.61 1107.59,336.60 C1120.33,337.57 1126.89,335.62 1139.76,334.90 C1152.63,334.18 1159.06,333.76 1171.93,333.00" fill="none" stroke="#1b9ad0" stroke-width="2"/>
<circle cx="239.00" cy="334.00" r="3" fill="#1b9ad0"/>
<circle cx="271.17" cy="321.40" r="3" fill="#1b9ad0"/>
<circle cx="303.34" cy="340.40" r="3" fill="#1b9ad0"/>
<circle cx="335.51" cy="336.90" r="3" fill="#1b9ad0"/>
<circle cx="367.68" cy="329.10" r="3" fill="#1b9ad0"/>
<circle cx="399.85" cy="285.00" r="3" fill="#1b9ad0"/>
<circle cx="432.02" cy="319.20" r="3" fill="#1b9ad0"/>
<circle cx="464.19" cy="321.00" r="3" fill="#1b9ad0"/>
<circle cx="496.36" cy="316.50" r="3" fill="#1b9ad0"/>
<circle cx="528.53" cy="336.90" r="3" fill="#1b9ad0"/>
<circle cx="560.70" cy="312.60" r="3" fill="#1b9ad0"/>
<circle cx="592.87" cy="310.40" r="3" fill="#1b9ad0"/>
<circle cx="625.04" cy="332.00" r="3" fill="#1b9ad0"/>
<circle cx="657.21" cy="315.90" r="3" fill="#1b9ad0"/>
<circle cx="689.38" cy="323.60" r="3" fill="#1b9ad0"/>
<circle cx="721.55" cy="336.90" r="3" fill="#1b9ad0"/>
<circle cx="753.72" cy="333.60" r="3" fill="#1b9ad0"/>
<circle cx="785.89" cy="337.50" r="3" fill="#1b9ad0"/>
<circle cx="818.06" cy="314.30" r="3" fill="#1b9ad0"/>
<circle cx="850.23" cy="318.80" r="3" fill="#1b9ad0"/>
<circle cx="882.40" cy="341.70" r="3" fill="#1b9ad0"/>
<circle cx="914.57" cy="353.90" r="3" fill="#1b9ad0"/>
<circle cx="946.74" cy="352.30" r="3" fill="#1b9ad0"/>
<circle cx="978.91" cy="343.00" r="3" fill="#1b9ad0"/>
<circle cx="1011.08" cy="325.80" r="3" fill="#1b9ad0"/>
<circle cx="1043.25" cy="340.30" r="3" fill="#1b9ad0"/>
<circle cx="1075.42" cy="330.00" r="3" fill="#1b9ad0"/>
<circle cx="1107.59" cy="336.60" r="3" fill="#1b9ad0"/>
<circle cx="1139.76" cy="334.90" r="3" fill="#1b9ad0"/>
<circle cx="1171.93" cy="333.00" r="3" fill="#1b9ad0"/>
<circle cx="496" cy="376.8" r="7.4" fill="#0d8dc4"/>
<path d="M492.4,380.2 L492.9,378.40000000000003 L498.2,373.1 L499.7,374.6 L494.4,379.90000000000003 Z" fill="#fff"/>
<circle cx="1171.8" cy="376.9" r="7.4" fill="#0d8dc4"/>
<path d="M1168.2,380.29999999999995 L1168.7,378.5 L1174.0,373.2 L1175.5,374.7 L1170.2,380.0 Z" fill="#fff"/>
<rect x="490.5" y="430.2" width="7.8" height="7.8" fill="#2e7d32"/>
<text x="502.7" y="437.2" font-size="7.7" letter-spacing="-0.3" fill="#555">1位</text>
<rect x="527.6" y="430.2" width="7.8" height="7.8" fill="#4caf50"/>
<text x="539" y="437.2" font-size="7.7" letter-spacing="-0.3" fill="#555">2位〜5位</text>
<rect x="583.8" y="430.2" width="7.8" height="7.8" fill="#0277a8"/>
<text x="595.3" y="437.2" font-size="7.7" letter-spacing="-0.3" fill="#555">6位〜10位</text>
<rect x="644.8" y="430.2" width="7.8" height="7.8" fill="#5bc2e3"/>
<text x="657" y="437.2" font-size="7.7" letter-spacing="-0.3" fill="#555">11位〜20位</text>
<rect x="709.5" y="430.2" width="7.8" height="7.8" fill="#fb8c00"/>
<text x="720.8" y="437.2" font-size="7.7" letter-spacing="-0.3" fill="#555">21位〜30位</text>
<rect x="773.5" y="430.2" width="7.8" height="7.8" fill="#ffc97f"/>
<text x="785" y="437.2" font-size="7.7" letter-spacing="-0.3" fill="#555">31位〜50位</text>
<rect x="838.6" y="430.2" width="7.8" height="7.8" fill="#c6cacb"/>
<text x="849.6" y="437.2" font-size="7.7" letter-spacing="-0.3" fill="#555">圏外</text>
<line x1="877.6" y1="434" x2="886.7" y2="434" stroke="#1b9ad0" stroke-width="2"/><circle cx="882" cy="434" r="2.6" fill="#1b9ad0"/>
<text x="890.3" y="437.2" font-size="7.7" letter-spacing="-0.3" fill="#555">想定流入数</text>
</svg>

<div class="a" style="left:194.3px;top:452px;width:1032.7px;height:54.7px;background:#fff7e5;border:1.2px solid #e6c158;border-radius:3px"></div>
<div class="t" style="left:204.6px;top:461.6px;font-size:8.6px;letter-spacing:-0.56px;color:#333;line-height:11.95px">※2025年9月中旬のGoogle検索仕様変更に伴い、本機能では以下のような影響・変更が生じています。<span style="color:#1a8ac0">詳細はこちら</span><br><b>・2025年9月中旬〜10月7日</b>:11位以下の一部データが「圏外」として集計されている場合があります。<br><b>・2025年10月8日以降</b>:日々のデータ取得範囲を「検索結果の4ページ目まで」に変更し、引き続き安定的にモニタリングいただけるよう調整しました。</div>

<!-- bottom controls -->
<div class="chip" style="left:174.9px;width:62.8px">キーワード</div>
<div class="chip" style="left:241.8px;width:50.3px">検索vol</div>
<div class="chip" style="left:295.5px;width:61.9px">想定流入数</div>
<div class="chip" style="left:363.3px;width:68.7px">平均SEO順位</div>
<div class="chip" style="left:437px;width:54.6px">順位差分</div>
<div class="chip" style="left:496.7px;width:37.6px">URL</div>

<div class="t" style="left:175px;top:562px;font-size:8.5px;letter-spacing:-0.37px;color:#444;line-height:12px">全 671 件中 1 件 〜25 件を表示</div>
<svg class="a" style="left:317.5px;top:564px" width="7" height="8" viewBox="0 0 7 8"><path d="M4.6,0.8 L1.6,4 L4.6,7.2" fill="none" stroke="#aaa" stroke-width="1.1"/></svg>
<div class="a" style="left:333.6px;top:558.9px;width:19.4px;height:19.4px;border-radius:50%;background:#fff"></div>
<div class="pg" style="left:336.3px">1</div>
<div class="pg" style="left:359.3px">2</div>
<div class="pg" style="left:381.9px">3</div>
<div class="pg" style="left:405px">4</div>
<div class="pg" style="left:428px">5</div>
<div class="pg" style="left:450px">...</div>
<div class="pg" style="left:473.5px">27</div>
<svg class="a" style="left:499.5px;top:564px" width="7" height="8" viewBox="0 0 7 8"><path d="M2.4,0.8 L5.4,4 L2.4,7.2" fill="none" stroke="#333" stroke-width="1.3"/></svg>

<svg class="a" style="left:842.5px;top:562.5px" width="10" height="10" viewBox="0 0 10 10"><path d="M5,0.8 V6.4 M2.6,4.2 L5,6.6 L7.4,4.2 M1.2,6.8 V9 H8.8 V6.8" fill="none" stroke="#1a8ac0" stroke-width="1.1"/></svg>
<div class="t" style="left:859.7px;top:562px;font-size:8.6px;letter-spacing:-0.56px;font-weight:bold;color:#1a8ac0;line-height:12px">データダウンロード（CSV）</div>
<div class="a" style="left:986.3px;top:557px;width:114px;height:22.4px;border-radius:11.2px;background:#787878"></div>
<svg class="a" style="left:997px;top:561.5px" width="12" height="12" viewBox="0 0 14 14"><path d="M5.86,2.54 L6.31,0.74 L7.69,0.74 L8.14,2.54 L9.34,3.04 L10.94,2.08 L11.92,3.06 L10.96,4.66 L11.46,5.86 L13.26,6.31 L13.26,7.69 L11.46,8.14 L10.96,9.34 L11.92,10.94 L10.94,11.92 L9.34,10.96 L8.14,11.46 L7.69,13.26 L6.31,13.26 L5.86,11.46 L4.66,10.96 L3.06,11.92 L2.08,10.94 L3.04,9.34 L2.54,8.14 L0.74,7.69 L0.74,6.31 L2.54,5.86 L3.04,4.66 L2.08,3.06 L3.06,2.08 L4.66,3.04 Z" fill="none" stroke="#fff" stroke-width="1.2" stroke-linejoin="round"/><circle cx="7" cy="7" r="2.1" fill="none" stroke="#fff" stroke-width="1.2"/></svg>
<div class="t" style="left:1015px;top:562px;font-size:9px;font-weight:bold;color:#fff;line-height:12px">表示する列を選択</div>
<div class="a" style="left:1115.2px;top:557px;width:131.6px;height:22.4px;border-radius:11.2px;background:#0b8bbd"></div>
<svg class="a" style="left:1126.5px;top:563px" width="10" height="10" viewBox="0 0 10 10"><path d="M5,0.8 V9.2 M0.8,5 H9.2" stroke="#fff" stroke-width="1.4"/></svg>
<div class="t" style="left:1144px;top:562px;font-size:9px;font-weight:bold;color:#fff;line-height:12px">キーワードを追加する</div>

<!-- table header -->
<div class="a" style="left:174.5px;top:589.6px;width:617.2px;height:19.4px;background:#e0f4fa"></div>
<div class="a" style="left:791.7px;top:589.6px;width:445.3px;height:19.4px;background:#effafc"></div>
<div class="a" style="left:323px;top:589.6px;width:1px;height:19.4px;background:#5ab6da"></div>
<div class="t" style="left:333.9px;top:600px;font-size:8.6px;letter-spacing:-0.5px;font-weight:bold;color:#333;line-height:11px">キーワード</div>
<div class="a" style="left:1237px;top:589.8px;width:10px;height:19.2px;background:#fff"></div>
<svg class="a" style="left:1237px;top:592px" width="10" height="17" viewBox="0 0 10 17"><path d="M2.2,5.8 L5,1.3 L7.8,5.8 Z" fill="#888" stroke="#888" stroke-width="0.5" stroke-linejoin="round"/><path d="M2.2,17 V12.6 A2.8,2.8 0 0 1 7.8,12.6 V17 Z" fill="#888"/></svg>
</body>
</html>
